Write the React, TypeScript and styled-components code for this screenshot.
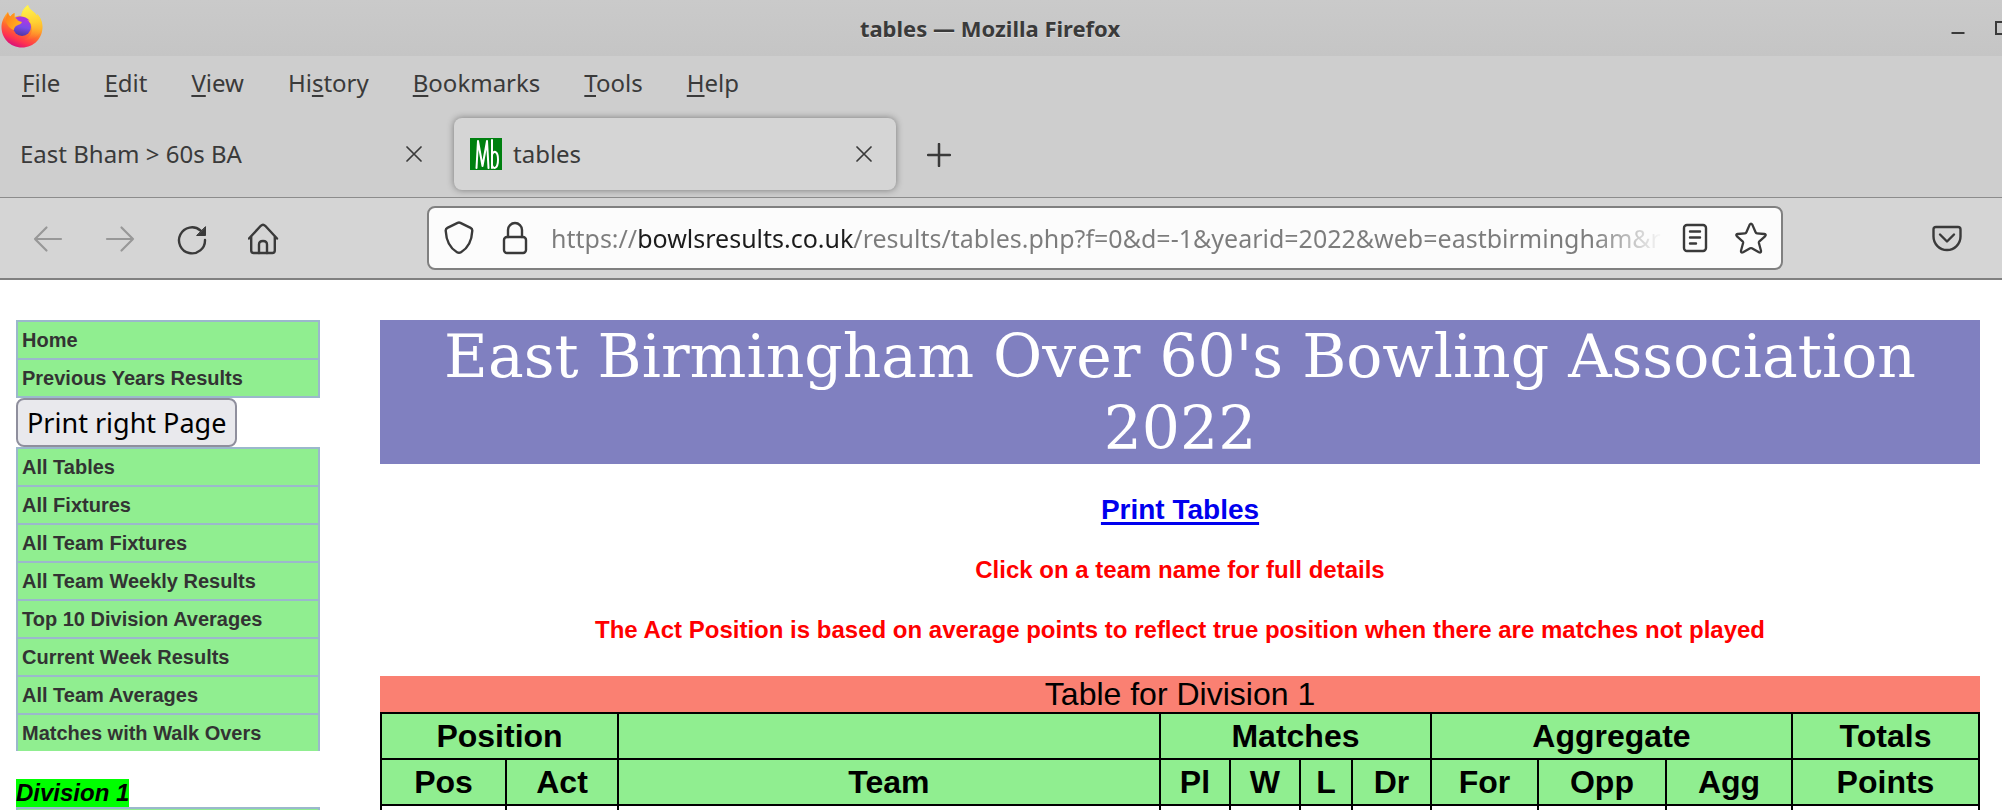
import React from "react";
import styled, { createGlobalStyle, css } from "styled-components";

const uiFont = '"Noto Sans", sans-serif';
const pageFont = '"Liberation Sans", Arial, sans-serif';
const ink = "#3a3a3a";

const GlobalStyle = createGlobalStyle`
  *, *::before, *::after { box-sizing: border-box; }
  body { margin: 0; background: #fff; }
  button, input { font: inherit; color: inherit; }
  svg { display: block; flex: none; }
`;

const Window = styled.div`
  display: flex;
  flex-direction: column;
  height: 100vh;
  overflow: hidden;
`;

/* ---------- browser chrome ---------- */

const Chrome = styled.header`
  flex: none;
  font-family: ${uiFont};
  font-size: 24px;
  line-height: 32px;
  color: ${ink};
  background: #cecece;
  border-bottom: 2px solid #808080;
`;

const PlainButton = styled.button`
  display: flex;
  align-items: center;
  justify-content: center;
  flex: none;
  padding: 0;
  border: 0;
  background: none;
`;

const TitleBar = styled.div`
  display: flex;
  height: 56px;
  background: linear-gradient(#cacaca, #c5c5c5);
`;

const AppIcon = styled.div`
  flex: none;
  width: 44px;
  padding-top: 4px;
`;

const WindowTitle = styled.div`
  flex: 1;
  text-align: center;
  font-size: 22px;
  font-weight: 700;
  line-height: 56px;
  text-shadow: 0 1px 0 rgba(255, 255, 255, 0.4);
`;

const WindowControls = styled.div`
  display: flex;
  flex: none;
  width: 66px;
  overflow: hidden;
`;

const WindowButton = styled(PlainButton)`
  width: 44px;
`;

const MenuBar = styled.nav`
  display: flex;
  height: 56px;
  padding-bottom: 2px;
`;

const MenuItem = styled(PlainButton)`
  display: block;
  padding: 0 22px;
`;

const AccessKey = styled.span`
  text-decoration: underline;
  text-decoration-thickness: 2px;
  text-underline-offset: 3px;
`;

const TabStrip = styled.div`
  display: flex;
  gap: 8px;
  padding: 6px 0 7px;
  border-bottom: 1px solid #8c8c8c;
`;

const Tab = styled.div<{ $active?: boolean }>`
  display: flex;
  align-items: center;
  width: 442px;
  height: 72px;
  padding: 0 16px;
  border-radius: 8px;
  ${(p) =>
    p.$active &&
    css`
      background: #d5d5d5;
      box-shadow: 0 0 7px rgba(0, 0, 0, 0.42);
    `}

  &:first-child {
    width: 446px;
    padding-left: 20px;
  }
`;

const TabLabel = styled.span`
  flex: 1;
`;

const Favicon = styled.svg`
  margin-right: 11px;
`;

const TabClose = styled(PlainButton)`
  width: 32px;
  height: 32px;
`;

const NewTab = styled(PlainButton)`
  width: 70px;
  padding-top: 2px;
`;

const Toolbar = styled.div`
  display: flex;
  align-items: center;
  height: 80px;
  background: #d5d5d5;
`;

const NavButtons = styled.div`
  display: flex;
  flex: none;
  width: 427px;
  padding: 2px 0 0 12px;
`;

const NavButton = styled(PlainButton)`
  width: 72px;
  height: 64px;

  &:disabled {
    color: #989898;
  }
`;

const AddressBar = styled.div`
  display: flex;
  align-items: center;
  flex: 1;
  height: 64px;
  padding: 0 2px;
  border: 2px solid #808080;
  border-radius: 8px;
  background: #fcfcfc;
`;

const AddressButton = styled(PlainButton)`
  width: 56px;
  height: 56px;
`;

/* The host name is darker than the rest, and the end of the URL fades out. */
const AddressInput = styled.input`
  flex: 1;
  min-width: 0;
  margin-left: 8px;
  padding: 0;
  border: 0;
  outline: 0;
  font-size: 25px;
  line-height: 36px;
  color: transparent;
  background: linear-gradient(
    90deg,
    #7c7c7c 86px,
    #1c1c1c 86px,
    #1c1c1c 303px,
    #7c7c7c 303px
  );
  background-clip: text;
  -webkit-background-clip: text;
  mask-image: linear-gradient(90deg, #000 calc(100% - 74px), transparent calc(100% - 4px));
`;

const ToolbarEnd = styled.div`
  display: flex;
  flex: none;
  width: 219px;
  padding: 2px 0 0 128px;
`;

/* ---------- page ---------- */

const Page = styled.div`
  display: flex;
  gap: 60px;
  padding: 40px 22px 0 16px;
  font-family: ${pageFont};
`;

const Sidebar = styled.nav`
  flex: none;
  width: 304px;
`;

const LinkList = styled.ul<{ $open?: boolean }>`
  margin: 0;
  padding: 0;
  list-style: none;
  border: solid #9bb8cc;
  border-width: 0 2px ${(p) => (p.$open ? "0" : "2px")};
`;

const SideLink = styled.a`
  display: block;
  height: 38px;
  padding: 0 4px;
  border-top: 2px solid #9bb8cc;
  background: #90ee90;
  font-size: 20px;
  font-weight: 700;
  line-height: 36px;
  color: #333;
  text-decoration: none;
`;

const PrintButton = styled.button`
  display: block;
  height: 49px;
  padding: 0 9px;
  border: 2px solid #8f8f9d;
  border-radius: 8px;
  background: #e9e9ed;
  font-family: ${uiFont};
  font-size: 27px;
  line-height: 45px;
  color: #000;
`;

const DivisionHeading = styled.h2`
  width: fit-content;
  margin: 28px 0 0;
  background: #0f0;
  font-size: 24px;
  font-style: italic;
  line-height: 28px;
`;

const Main = styled.main`
  flex: 1;
  min-width: 0;
  text-align: center;
`;

const Banner = styled.h1`
  margin: 0;
  background: #8080c0;
  font-family: "DejaVu Serif", serif;
  font-size: 60px;
  font-weight: 400;
  line-height: 72px;
  color: #fff;
`;

const PrintLine = styled.p`
  margin: 28px 0;
  font-size: 28px;
  font-weight: 700;
  line-height: 36px;
`;

const PrintLink = styled.a`
  color: #0000ee;
  text-decoration-thickness: 3px;
  text-underline-offset: 3px;
  text-decoration-skip-ink: none;
`;

const Notice = styled.p`
  margin: 0 0 32px;
  font-size: 24px;
  font-weight: 700;
  line-height: 28px;
  color: #f00;
`;

const Table = styled.table`
  width: 100%;
  table-layout: fixed;
  border-collapse: collapse;
  font-size: 32px;
  line-height: 36px;
`;

const Caption = styled.caption`
  background: salmon;
`;

const Column = styled.col<{ $width?: number }>`
  width: ${(p) => (p.$width ? `${p.$width}px` : "auto")};
`;

const HeadCell = styled.th`
  height: 46px;
  padding: 0;
  border: 2px solid #000;
  background: #90ee90;
`;

const Cell = styled.td`
  height: 46px;
  border: 2px solid #000;
`;

/* ---------- icons ---------- */

const stroke = {
  fill: "none",
  stroke: "currentColor",
  strokeWidth: 2,
  strokeLinecap: "round" as const,
  strokeLinejoin: "round" as const,
};

const FirefoxLogo = () => (
  <svg width="44" height="46" viewBox="0 0 44 46" aria-hidden="true">
    <defs>
      <linearGradient id="fx-body" x1="0.75" y1="0.1" x2="0.35" y2="1">
        <stop offset="0" stopColor="#ffe53a" />
        <stop offset="0.35" stopColor="#ffb02a" />
        <stop offset="0.6" stopColor="#ff6a2e" />
        <stop offset="0.82" stopColor="#ff3350" />
        <stop offset="1" stopColor="#d6107c" />
      </linearGradient>
      <linearGradient id="fx-flame" x1="0.5" y1="0" x2="0.6" y2="1">
        <stop offset="0" stopColor="#fff44f" />
        <stop offset="0.5" stopColor="#ffd033" />
        <stop offset="1" stopColor="#ff9a28" stopOpacity="0" />
      </linearGradient>
      <linearGradient id="fx-globe" x1="0.6" y1="0" x2="0.4" y2="1">
        <stop offset="0" stopColor="#b833e1" />
        <stop offset="0.5" stopColor="#7a4be8" />
        <stop offset="1" stopColor="#4f37a0" />
      </linearGradient>
      <linearGradient id="fx-head" x1="0" y1="0" x2="1" y2="0.6">
        <stop offset="0" stopColor="#ff7a1c" />
        <stop offset="1" stopColor="#ffb41f" />
      </linearGradient>
    </defs>
    <path
      d="M8 8C5 11 2 16 1.500 22C1 34 10 43.500 22 43.500C34 43.500 43 34 42.500 22C42.300 17 40 12.500 37 10L37.500 13C35 7 29 6 28 1C24 4 21.500 8 21.500 12C18 11.500 16.500 12.500 14.500 13L14.500 9C12.500 10 11.500 11 10.500 12.500C9 11.500 8.300 10 8 8Z"
      fill="url(#fx-body)"
    />
    <path
      d="M28 1C23.500 4 21 8.500 21.500 13C27 14 32 18 32 25C32 30 29 34 24 36C34 37 42 30 42 21C41 16 39.500 12.500 37 10L37.500 13C35 7 29 6 28 1Z"
      fill="url(#fx-flame)"
    />
    <circle cx="22" cy="23" r="9" fill="url(#fx-globe)" />
    <path
      d="M15 14C19 11.500 26 12 30 17C27 15.500 25.500 16 24.500 17.500C23 18 21 18 20 17Z"
      fill="#a637df"
    />
    <path
      d="M8 8C8.300 10 9 11.500 10.500 12.500C11.500 11 12.500 10 14.500 9L14.500 13.500C16 15.500 18.500 17.500 22 18C21.500 20 19 20.500 17 21.500C15 22.500 14 24 14 26C10.500 25 6 21 5.500 15Z"
      fill="url(#fx-head)"
    />
  </svg>
);

const CloseIcon = () => (
  <svg width="16" height="16" viewBox="0 0 16 16" {...stroke} strokeWidth={1.700}>
    <path d="M1 1L15 15M15 1L1 15" />
  </svg>
);

const PlusIcon = () => (
  <svg width="24" height="24" viewBox="0 0 24 24" {...stroke} strokeWidth={2.500}>
    <path d="M12 1V23M1 12H23" />
  </svg>
);

const BackIcon = () => (
  <svg width="32" height="32" viewBox="0 0 32 32" {...stroke} strokeWidth={2.200}>
    <path d="M29 16H3M14.500 4.500L3 16L14.500 27.500" />
  </svg>
);

const ForwardIcon = () => (
  <svg width="32" height="32" viewBox="0 0 32 32" {...stroke} strokeWidth={2.200}>
    <path d="M3 16H29M17.500 4.500L29 16L17.500 27.500" />
  </svg>
);

const ReloadIcon = () => (
  <svg width="32" height="32" viewBox="0 0 32 32" {...stroke} strokeWidth={2.400}>
    <path d="M24.500 7.500A13 13 0 1 0 29 17" />
    <path d="M29.500 4V12.500H21Z" fill="currentColor" strokeWidth={1} />
  </svg>
);

const HomeIcon = () => (
  <svg width="32" height="32" viewBox="1 0 32 32" {...stroke} strokeWidth={2.400}>
    <path d="M2 15.500L13.800 2.800Q16 0.600 18.200 2.800L30 15.500" />
    <path d="M4.200 14V27.500Q4.200 30 6.700 30H25.300Q27.800 30 27.800 27.500V14" />
    <path d="M12 30V21.500Q12 18 16 18Q20 18 20 21.500V30" />
  </svg>
);

const ShieldIcon = () => (
  <svg width="32" height="34" viewBox="0 0 32 34" {...stroke} strokeWidth={2.400}>
    <path d="M14.600 1.900Q16 1.200 17.400 1.900L27.600 6.900Q29.400 7.800 29.300 9.800C28.800 19 25.500 27 18 31.200Q16 32.400 14 31.200C6.500 27 3.200 19 2.700 9.800Q2.600 7.800 4.400 6.900Z" />
  </svg>
);

const LockIcon = () => (
  <svg width="26" height="34" viewBox="0 0 26 34" {...stroke} strokeWidth={2.400}>
    <rect x="2" y="16" width="22" height="16" rx="3" />
    <path d="M6 16V9A7 7 0 0 1 20 9V16" />
  </svg>
);

const ReaderIcon = () => (
  <svg width="26" height="30" viewBox="0 0 26 30" {...stroke} strokeWidth={2.400}>
    <rect x="2" y="2" width="22" height="26" rx="3" />
    <path d="M8 8.500H18M8 14.500H18M8 20.500H14" />
  </svg>
);

const StarIcon = () => (
  <svg width="32" height="32" viewBox="0 0 32 32" {...stroke} strokeWidth={2.300}>
    <path d="M14.700 2.600Q16 0.500 17.300 2.600L20.600 10.200Q21 11.200 22 11.300L29.300 12Q31.700 12.500 30 14.300L24.400 19.300Q23.700 20 23.900 21L26 28.800Q26.200 31.300 23.900 30.300L16.900 26.300Q16 25.900 15.100 26.300L8.100 30.300Q5.800 31.300 6 28.800L8.100 21Q8.300 20 7.600 19.300L2 14.300Q0.300 12.500 2.700 12L10 11.300Q11 11.200 11.400 10.200Z" />
  </svg>
);

const PocketIcon = () => (
  <svg width="30" height="28" viewBox="0 0 30 28" {...stroke} strokeWidth={2.400}>
    <path d="M4 2H26Q28.500 2 28.500 4.500V11.500A13.500 13.500 0 0 1 1.500 11.500V4.500Q1.500 2 4 2Z" />
    <path d="M8 9.500L15 16.500L22 9.500" />
  </svg>
);

/* ---------- data ---------- */

const menus = [
  ["", "F", "ile"],
  ["", "E", "dit"],
  ["", "V", "iew"],
  ["Hi", "s", "tory"],
  ["", "B", "ookmarks"],
  ["", "T", "ools"],
  ["", "H", "elp"],
];

const topLinks = ["Home", "Previous Years Results"];
const resultLinks = [
  "All Tables",
  "All Fixtures",
  "All Team Fixtures",
  "All Team Weekly Results",
  "Top 10 Division Averages",
  "Current Week Results",
  "All Team Averages",
  "Matches with Walk Overs",
];

const groups: [string, number][] = [
  ["Position", 2],
  ["", 1],
  ["Matches", 4],
  ["Aggregate", 3],
  ["Totals", 1],
];

const columns: { name: string; width?: number }[] = [
  { name: "Pos", width: 125 },
  { name: "Act", width: 112 },
  { name: "Team" },
  { name: "Pl", width: 70 },
  { name: "W", width: 70 },
  { name: "L", width: 52 },
  { name: "Dr", width: 79 },
  { name: "For", width: 107 },
  { name: "Opp", width: 128 },
  { name: "Agg", width: 126 },
  { name: "Points", width: 187 },
];

const Links = ({ items, open }: { items: string[]; open?: boolean }) => (
  <LinkList $open={open}>
    {items.map((item) => (
      <li key={item}>
        <SideLink href="#">{item}</SideLink>
      </li>
    ))}
  </LinkList>
);

export default function App() {
  return (
    <Window>
      <GlobalStyle />
      <Chrome>
        <TitleBar>
          <AppIcon>
            <FirefoxLogo />
          </AppIcon>
          <WindowTitle>tables — Mozilla Firefox</WindowTitle>
          <WindowControls>
            <WindowButton aria-label="Minimise">
              <svg width="14" height="14" viewBox="0 0 14 14">
                <path d="M0.500 12H13.500" stroke={ink} strokeWidth="2" />
              </svg>
            </WindowButton>
            <WindowButton aria-label="Maximise">
              <svg width="14" height="14" viewBox="0 0 14 14">
                <rect x="1" y="1" width="12" height="12" fill="none" stroke={ink} strokeWidth="2" />
              </svg>
            </WindowButton>
          </WindowControls>
        </TitleBar>

        <MenuBar>
          {menus.map(([before, key, after]) => (
            <MenuItem key={key + after}>
              {before}
              <AccessKey>{key}</AccessKey>
              {after}
            </MenuItem>
          ))}
        </MenuBar>

        <TabStrip>
          <Tab>
            <TabLabel>East Bham &gt; 60s BA</TabLabel>
            <TabClose aria-label="Close tab">
              <CloseIcon />
            </TabClose>
          </Tab>
          <Tab $active>
            <Favicon width="32" height="32" viewBox="0 0 32 32" {...stroke} stroke="#fff">
              <rect width="32" height="32" fill="#008010" stroke="none" />
              <path d="M6.500 30L8 3L12.500 28L17 3L18.500 30" />
              <path d="M22 2V30M22 17C23 12.500 28 12 28 21.500C28 31.500 23 31.500 22 27" />
            </Favicon>
            <TabLabel>tables</TabLabel>
            <TabClose aria-label="Close tab">
              <CloseIcon />
            </TabClose>
          </Tab>
          <NewTab aria-label="New tab">
            <PlusIcon />
          </NewTab>
        </TabStrip>

        <Toolbar>
          <NavButtons>
            <NavButton aria-label="Back" disabled>
              <BackIcon />
            </NavButton>
            <NavButton aria-label="Forward" disabled>
              <ForwardIcon />
            </NavButton>
            <NavButton aria-label="Reload">
              <ReloadIcon />
            </NavButton>
            <NavButton aria-label="Home">
              <HomeIcon />
            </NavButton>
          </NavButtons>
          <AddressBar>
            <AddressButton aria-label="Tracking protection">
              <ShieldIcon />
            </AddressButton>
            <AddressButton aria-label="Connection security">
              <LockIcon />
            </AddressButton>
            <AddressInput
              aria-label="Address"
              defaultValue="https://bowlsresults.co.uk/results/tables.php?f=0&d=-1&yearid=2022&web=eastbirmingham&r"
            />
            <AddressButton aria-label="Reader view">
              <ReaderIcon />
            </AddressButton>
            <AddressButton aria-label="Bookmark this page">
              <StarIcon />
            </AddressButton>
          </AddressBar>
          <ToolbarEnd>
            <NavButton aria-label="Save to Pocket">
              <PocketIcon />
            </NavButton>
          </ToolbarEnd>
        </Toolbar>
      </Chrome>

      <Page>
        <Sidebar>
          <Links items={topLinks} />
          <PrintButton>Print right Page</PrintButton>
          <Links items={resultLinks} open />
          <DivisionHeading>Division 1</DivisionHeading>
          <Links items={[""]} />
        </Sidebar>

        <Main>
          <Banner>East Birmingham Over 60's Bowling Association 2022</Banner>
          <PrintLine>
            <PrintLink href="#">Print Tables</PrintLink>
          </PrintLine>
          <Notice>Click on a team name for full details</Notice>
          <Notice>
            The Act Position is based on average points to reflect true position when there are
            matches not played
          </Notice>
          <Table>
            <Caption>Table for Division 1</Caption>
            <colgroup>
              {columns.map((c) => (
                <Column key={c.name} $width={c.width} />
              ))}
            </colgroup>
            <thead>
              <tr>
                {groups.map(([name, span]) => (
                  <HeadCell key={name} colSpan={span} scope="colgroup">
                    {name}
                  </HeadCell>
                ))}
              </tr>
              <tr>
                {columns.map((c) => (
                  <HeadCell key={c.name} scope="col">
                    {c.name}
                  </HeadCell>
                ))}
              </tr>
            </thead>
            <tbody>
              <tr>
                {columns.map((c) => (
                  <Cell key={c.name} />
                ))}
              </tr>
            </tbody>
          </Table>
        </Main>
      </Page>
    </Window>
  );
}
